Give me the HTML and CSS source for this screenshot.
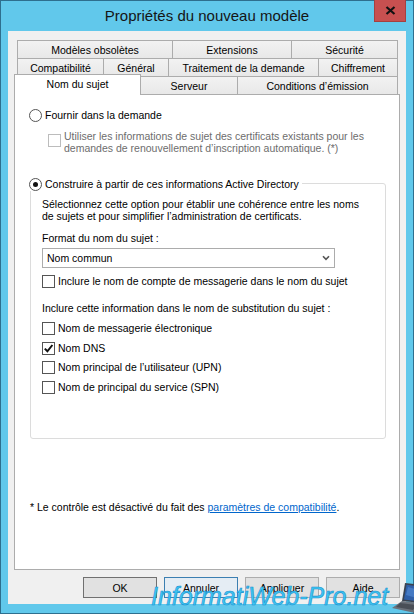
FILE: index.html
```html
<!DOCTYPE html>
<html>
<head>
    <meta charset="utf-8">
    <title>Propriétés du nouveau modèle</title>
    <link rel="stylesheet" href="styles.css">
</head>
<body>
    <div class="window">
        <div class="titlebar">
            <span class="title">Propriétés du nouveau modèle</span>
            <button class="close" type="button">
                <svg width="11" height="9" viewBox="0 0 11 9"><path d="M1.5 1 L9.5 8 M9.5 1 L1.5 8" stroke="#111" stroke-width="2.2" fill="none"/></svg>
            </button>
        </div>

        <div class="dialog">
            <div class="tabs">
                <div class="tab-row">
                    <div class="tab tab-obsoletes">Modèles obsolètes</div>
                    <div class="tab tab-extensions">Extensions</div>
                    <div class="tab tab-securite">Sécurité</div>
                </div>
                <div class="tab-row">
                    <div class="tab tab-compat">Compatibilité</div>
                    <div class="tab tab-general">Général</div>
                    <div class="tab tab-traitement">Traitement de la demande</div>
                    <div class="tab tab-chiffrement">Chiffrement</div>
                </div>
                <div class="tab-row">
                    <div class="tab tab-sujet active">Nom du sujet</div>
                    <div class="tab tab-serveur">Serveur</div>
                    <div class="tab tab-conditions">Conditions d’émission</div>
                </div>
            </div>

            <div class="page">
                <label class="option">
                    <span class="radio"></span>
                    <span>Fournir dans la demande</span>
                </label>

                <label class="option option-sub disabled">
                    <span class="check"></span>
                    <span class="multiline">Utiliser les informations de sujet des certificats existants pour les<br>demandes de renouvellement d’inscription automatique. (*)</span>
                </label>

                <div class="group">
                    <label class="option group-title">
                        <span class="radio checked"></span>
                        <span>Construire à partir de ces informations Active Directory</span>
                    </label>

                    <p class="desc">Sélectionnez cette option pour établir une cohérence entre les noms<br>de sujets et pour simplifier l’administration de certificats.</p>

                    <p class="field-label">Format du nom du sujet :</p>
                    <div class="select">
                        <span>Nom commun</span>
                        <svg width="8" height="6" viewBox="0 0 8 6"><path d="M1 1.2 L4 4.4 L7 1.2" stroke="#555" stroke-width="1.6" fill="none"/></svg>
                    </div>

                    <label class="option option-mail">
                        <span class="check"></span>
                        <span>Inclure le nom de compte de messagerie dans le nom du sujet</span>
                    </label>

                    <p class="field-label field-alt">Inclure cette information dans le nom de substitution du sujet :</p>
                    <div class="check-list">
                        <label class="option">
                            <span class="check"></span>
                            <span>Nom de messagerie électronique</span>
                        </label>
                        <label class="option">
                            <span class="check checked">
                                <svg width="11" height="11" viewBox="0 0 11 11"><path d="M1.8 5.6 L4.4 8.3 L9.4 2" stroke="#111" stroke-width="2" fill="none"/></svg>
                            </span>
                            <span>Nom DNS</span>
                        </label>
                        <label class="option">
                            <span class="check"></span>
                            <span>Nom principal de l’utilisateur (UPN)</span>
                        </label>
                        <label class="option">
                            <span class="check"></span>
                            <span>Nom de principal du service (SPN)</span>
                        </label>
                    </div>
                </div>

                <p class="note">* Le contrôle est désactivé du fait des <a href="#">paramètres de compatibilité</a>.</p>
            </div>

            <div class="buttons">
                <button type="button" class="btn btn-default">OK</button>
                <button type="button" class="btn btn-hover">Annuler</button>
                <button type="button" class="btn">Appliquer</button>
                <button type="button" class="btn">Aide</button>
            </div>
        </div>

        <div class="watermark">
            <span>InformatiWeb-Pro.net</span>
            <svg class="laptop" width="32" height="32" viewBox="0 0 32 32">
                <path d="M13 1 L31 3 L28 21 L10 19 Z" fill="#3a4250"/>
                <path d="M14.5 2.8 L29.3 4.5 L26.8 19.2 L12 17.6 Z" fill="#2f5fa8"/>
                <path d="M16 5 L27 8 L25 16 L14 13 Z" fill="#4f86d0" opacity="0.7"/>
                <path d="M10 19 L28 21 L23 31 L0 26 Z" fill="#6b717a"/>
                <path d="M8 21 L24 23 L21 28 L4 25 Z" fill="#4a4f57"/>
            </svg>
        </div>
    </div>
</body>
</html>
```

FILE: styles.css
```css
* {
    box-sizing: border-box;
}

body {
    margin: 0;
    font-family: "Liberation Sans", Arial, sans-serif;
    font-size: 10.5px;
    color: #000;
}

.window {
    position: relative;
    width: 414px;
    height: 614px;
    border: 1px solid #2e6f8e;
    background: #61c8eb;
}

/* title bar */
.titlebar {
    position: relative;
    height: 30px;
    display: flex;
    align-items: center;
    justify-content: center;
}

.title {
    font-size: 15px;
    color: #151515;
    margin-top: -1px;
}

.close {
    position: absolute;
    top: -1px;
    right: 7px;
    width: 32px;
    height: 22px;
    padding: 0;
    border: 1px solid #a64040;
    border-top: none;
    background: #c75050;
    display: flex;
    align-items: center;
    justify-content: center;
}

/* dialog body */
.dialog {
    margin: 0 7px;
    height: 573px;
    padding: 9px 6px 6px;
    background: #f0f0f0;
}

.tabs {
    height: 54px;
}

.tab-row {
    display: flex;
    height: 18px;
    padding-left: 3px;
}

.tab {
    height: 18px;
    margin-left: -1px;
    border: 1px solid #acacac;
    border-bottom: none;
    background: linear-gradient(#f2f2f2, #e8e8e8);
    display: flex;
    align-items: center;
    justify-content: center;
    white-space: nowrap;
}

.tab:first-child {
    margin-left: 0;
}

.tab-obsoletes { width: 156px; }
.tab-extensions { width: 120px; }
.tab-securite { width: 107px; }

.tab-compat { width: 87px; }
.tab-general { width: 66px; }
.tab-traitement { width: 151px; }
.tab-chiffrement { width: 80px; }

.tab-sujet { width: 127px; }
.tab-serveur { width: 98px; }
.tab-conditions { width: 161px; }

.tab.active {
    position: relative;
    z-index: 1;
    height: 21px;
    margin: -2px 0 -1px -3px;
    background: #fff;
    padding-bottom: 2px;
}

.tab.active + .tab {
    margin-left: -1px;
}

.page {
    height: 476px;
    border: 1px solid #acacac;
    background: #fff;
    padding: 14px 14px 0;
}

/* controls */
.option {
    display: flex;
    align-items: center;
    gap: 3px;
    line-height: 13px;
    white-space: nowrap;
}

.radio {
    flex: none;
    width: 13px;
    height: 13px;
    border: 1px solid #555;
    border-radius: 50%;
    background: #fff;
    display: flex;
    align-items: center;
    justify-content: center;
}

.radio.checked::after {
    content: "";
    width: 5px;
    height: 5px;
    border-radius: 50%;
    background: #111;
}

.check {
    flex: none;
    width: 13px;
    height: 13px;
    border: 1px solid #555;
    background: #fff;
    display: flex;
    align-items: center;
    justify-content: center;
}

.option-sub {
    margin: 8px 0 0 19px;
    align-items: flex-start;
}

.option-sub .check {
    margin-top: 4px;
}

.multiline {
    line-height: 12px;
}

.disabled {
    color: #6d6d6d;
}

.disabled .check {
    border-color: #bcbcbc;
}

.group {
    margin: 29px -1px 0 1px;
    border: 1px solid #dcdcdc;
    border-radius: 3px;
    padding: 0 11px 44px;
}

.group-title {
    width: fit-content;
    margin: -6px 0 0 -13px;
    padding-right: 3px;
    background: #fff;
}

.desc {
    margin: 7px 0 0;
    line-height: 12px;
}

.field-label {
    margin: 10px 0 0;
    line-height: 12px;
}

.select {
    margin-top: 4px;
    width: 293px;
    height: 20px;
    border: 1px solid #acacac;
    background: #fff;
    display: flex;
    align-items: center;
    justify-content: space-between;
    padding: 0 4px 0 4px;
}

.option-mail {
    margin-top: 7px;
}

.field-alt {
    margin-top: 14px;
}

.check-list {
    margin-top: 8px;
    display: flex;
    flex-direction: column;
    gap: 6.5px;
}

.note {
    margin: 62px 0 0 1px;
    line-height: 12px;
}

.note a {
    color: #0066cc;
}

/* buttons */
.buttons {
    margin-top: 7px;
    display: flex;
    justify-content: flex-end;
    gap: 7px;
}

.btn {
    width: 74px;
    height: 21px;
    padding: 0;
    border: 1px solid #adadad;
    background: #e1e1e1;
    font-family: inherit;
    font-size: 10.5px;
    color: #000;
}

.btn-default {
    border-color: #707070;
}

.btn-hover {
    border-color: #3c7fb1;
    background: #e5edf4;
}

/* site watermark */
.watermark {
    position: absolute;
    left: 150px;
    bottom: -1px;
    display: flex;
    align-items: flex-end;
    gap: 4px;
    white-space: nowrap;
}

.watermark span {
    font-style: italic;
    font-size: 25px;
    line-height: 30px;
    color: #3cc7f2;
    -webkit-text-stroke: 0.6px #1d8fd0;
    margin-bottom: 3px;
}

.laptop {
    display: block;
}
```
